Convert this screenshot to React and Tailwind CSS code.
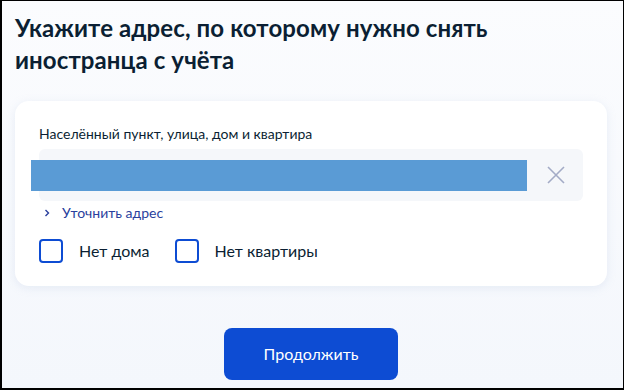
import React from "react";

export default function App() {
  return (
    <div
      className="w-[624px] h-[390px] overflow-hidden border-t border-r border-b-2 border-l-2 border-black bg-gradient-to-b from-[#fbfcfe] to-[#f4f7fc] flex flex-col"
      style={{ fontFamily: "Lato, 'Noto Sans', sans-serif" }}
    >
      <h1 className="pl-[13px] pt-[11px] text-[24px] leading-[32px] font-bold text-[#0b1f33] tracking-[0.1px]">
        Укажите адрес, по которому нужно снять
        <br />
        иностранца с учёта
      </h1>
      <div className="mt-[25px] ml-[13px] w-[592px] h-[185px] rounded-[14px] bg-white shadow-[0_2px_8px_rgba(180,195,225,0.25)] px-[24px] pt-[24px]">
        <div className="text-[14px] leading-[18px] text-[#0b1f33]">
          Населённый пункт, улица, дом и квартира
        </div>
        <div className="mt-[6px] h-[52px] rounded-[6px] bg-[#f5f7fa] flex items-center">
          <div className="ml-[-8px] h-[31px] w-[496px] bg-[#5a9bd5]" />
          <div className="ml-[20px] flex items-center justify-center w-[18px] h-[18px]">
            <svg width="18" height="18" viewBox="0 0 18 18">
              <path d="M1 1 L17 17 M17 1 L1 17" stroke="#a3abc6" strokeWidth="1.6" fill="none" />
            </svg>
          </div>
        </div>
        <div className="mt-[3px] flex items-center text-[14px] leading-[18px] text-[#2a3f9d]">
          <svg width="8" height="8" viewBox="0 0 8 8" className="ml-[4px]">
            <path d="M2.5 1 L5.5 4 L2.5 7" stroke="#2a3f9d" strokeWidth="1.4" fill="none" />
          </svg>
          <span className="ml-[11px]">Уточнить адрес</span>
        </div>
        <div className="mt-[17px] flex items-center text-[16px] text-[#0b1f33]">
          <div className="w-[24px] h-[24px] rounded-[4px] border-2 border-[#0d4cd3]" />
          <span className="ml-[16px]">Нет дома</span>
          <div className="ml-[25px] w-[24px] h-[24px] rounded-[4px] border-2 border-[#0d4cd3]" />
          <span className="ml-[16px]">Нет квартиры</span>
        </div>
      </div>
      <div className="mt-[42px] ml-[222px] w-[174px] h-[52px] rounded-[8px] bg-[#0d4cd3] flex items-center justify-center text-white text-[16px]">
        Продолжить
      </div>
    </div>
  );
}
